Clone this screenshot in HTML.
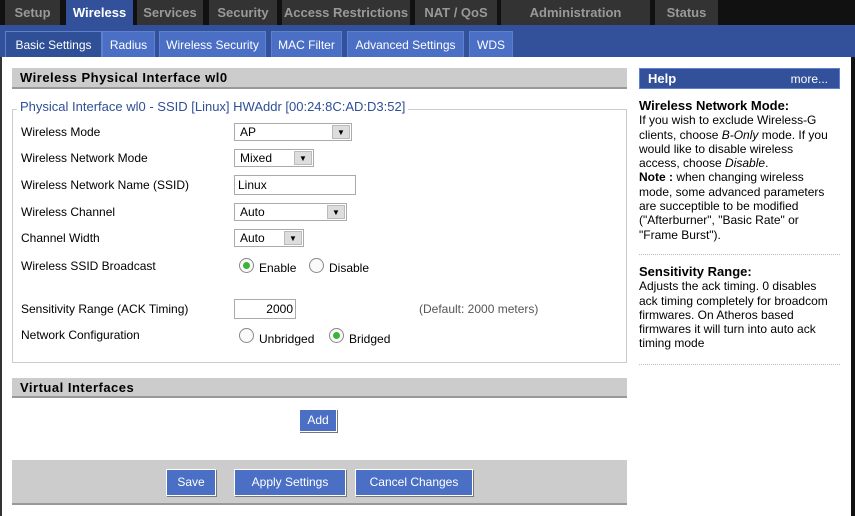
<!DOCTYPE html>
<html><head><meta charset="utf-8"><style>
*{margin:0;padding:0;box-sizing:border-box}
body{width:855px;height:516px;background:#fff;font-family:"Liberation Sans",sans-serif;font-size:12px;color:#000;position:relative;overflow:hidden}
.a{position:absolute}
.top{left:0;top:0;width:855px;height:25px;background:#111}
.tt{top:0;height:25px;background:#333;color:#999;font-weight:bold;font-size:13px;text-align:center;line-height:26px;white-space:nowrap}
.band{left:0;top:25px;width:855px;height:32px;background:#32519a}
.st{top:31px;height:26px;background:#4a6fc5;color:#fff;text-align:center;line-height:27px;font-size:12px;border:1px solid #5d80d0;border-bottom:none}
.hdr{background:#ccc;border-bottom:2px solid #999;font-weight:bold;font-size:13px;padding-left:8px;line-height:20px;letter-spacing:.5px}
.lbl{left:21px}
.sel{height:18px;border:1px solid #aaa;background:#fff;padding-left:5px;line-height:16px}
.sel i{position:absolute;right:1px;top:1px;width:18px;height:14px;background:#ddd;border:1px solid #bbb;font-style:normal;font-size:8px;text-align:center;line-height:13px}
.rad{width:15px;height:15px;border-radius:50%;border:1px solid #888;background:#fafafa}
.rad.on::after{content:"";position:absolute;left:3px;top:3px;width:7px;height:7px;border-radius:50%;background:#3bb33b}
.btn{background:#4a6fc5;color:#fff;text-align:center;border:1px solid #fff;box-shadow:1px 1px 0 #777;line-height:24px}
.help{left:639px;width:198px;font-size:12px;line-height:14.3px}
</style></head><body>
<div class="a top"></div>
<div class="a tt" style="left:5px;width:55px">Setup</div>
<div class="a tt" style="left:66px;width:67px;background:#32519a;color:#fff;height:30px">Wireless</div>
<div class="a tt" style="left:137px;width:66px">Services</div>
<div class="a tt" style="left:209px;width:68px">Security</div>
<div class="a tt" style="left:282px;width:128px">Access Restrictions</div>
<div class="a tt" style="left:415px;width:82px">NAT / QoS</div>
<div class="a tt" style="left:501px;width:149px">Administration</div>
<div class="a tt" style="left:655px;width:63px">Status</div>
<div class="a band"></div>
<div class="a st" style="left:5px;width:97px;background:#2f4f96;border-color:#5d80d0">Basic Settings</div>
<div class="a st" style="left:102px;width:53px">Radius</div>
<div class="a st" style="left:159px;width:107px">Wireless Security</div>
<div class="a st" style="left:271px;width:71px">MAC Filter</div>
<div class="a st" style="left:347px;width:117px">Advanced Settings</div>
<div class="a st" style="left:469px;width:44px">WDS</div>
<div class="a" style="left:0;top:57px;width:2px;height:459px;background:#333"></div>
<div class="a" style="left:851px;top:57px;width:4px;height:459px;background:#111"></div>

<div class="a hdr" style="left:12px;top:68px;width:615px;height:21px">Wireless Physical Interface wl0</div>
<div class="a" style="left:12px;top:109px;width:615px;height:254px;border:1px solid #ccc"></div>
<div class="a" style="left:17px;top:99px;background:#fff;color:#2f4f96;padding:0 3px;font-size:13px">Physical Interface wl0 - SSID [Linux] HWAddr [00:24:8C:AD:D3:52]</div>

<div class="a lbl" style="top:125px">Wireless Mode</div>
<div class="a sel" style="left:234px;top:123px;width:118px">AP<i>▼</i></div>
<div class="a lbl" style="top:151px">Wireless Network Mode</div>
<div class="a sel" style="left:234px;top:149px;width:80px">Mixed<i>▼</i></div>
<div class="a lbl" style="top:178px">Wireless Network Name (SSID)</div>
<div class="a" style="left:234px;top:175px;width:122px;height:20px;border:1px solid #aaa;padding-left:3px;line-height:18px">Linux</div>
<div class="a lbl" style="top:205px">Wireless Channel</div>
<div class="a sel" style="left:234px;top:203px;width:113px">Auto<i>▼</i></div>
<div class="a lbl" style="top:231px">Channel Width</div>
<div class="a sel" style="left:234px;top:229px;width:70px">Auto<i>▼</i></div>
<div class="a lbl" style="top:259px">Wireless SSID Broadcast</div>
<div class="a rad on" style="left:239px;top:258px"></div><div class="a" style="left:259px;top:261px">Enable</div>
<div class="a rad" style="left:309px;top:258px"></div><div class="a" style="left:329px;top:261px">Disable</div>
<div class="a lbl" style="top:302px">Sensitivity Range (ACK Timing)</div>
<div class="a" style="left:234px;top:299px;width:62px;height:20px;border:1px solid #aaa;text-align:right;padding-right:2px;line-height:18px">2000</div>
<div class="a" style="left:419px;top:302px;color:#555">(Default: 2000 meters)</div>
<div class="a lbl" style="top:328px">Network Configuration</div>
<div class="a rad" style="left:239px;top:328px"></div><div class="a" style="left:259px;top:332px">Unbridged</div>
<div class="a rad on" style="left:329px;top:328px"></div><div class="a" style="left:349px;top:332px">Bridged</div>

<div class="a hdr" style="left:12px;top:378px;width:615px;height:20px">Virtual Interfaces</div>
<div class="a btn" style="left:299px;top:409px;width:38px;height:23px;line-height:21px">Add</div>
<div class="a" style="left:12px;top:460px;width:615px;height:45px;background:#ccc;border-bottom:2px solid #999"></div>
<div class="a btn" style="left:166px;top:469px;width:50px;height:27px">Save</div>
<div class="a btn" style="left:234px;top:469px;width:112px;height:27px">Apply Settings</div>
<div class="a btn" style="left:355px;top:469px;width:118px;height:27px">Cancel Changes</div>

<div class="a" style="left:639px;top:68px;width:201px;height:21px;background:#32519a;border:1px solid #5d80d0;color:#fff"><b style="position:absolute;left:8px;top:2px;font-size:13px">Help</b><span style="position:absolute;right:11px;top:3px">more...</span></div>
<div class="a help" style="top:99px"><b style="font-size:13px">Wireless Network Mode:</b><br>If you wish to exclude Wireless-G clients, choose <i>B-Only</i> mode. If you would like to disable wireless access, choose <i>Disable</i>.<br><b>Note :</b> when changing wireless mode, some advanced parameters are succeptible to be modified ("Afterburner", "Basic Rate" or "Frame Burst").</div>
<div class="a" style="left:639px;top:254px;width:201px;border-top:1px dotted #bbb"></div>
<div class="a help" style="top:265px"><b style="font-size:13px">Sensitivity Range:</b><br>Adjusts the ack timing. 0 disables ack timing completely for broadcom firmwares. On Atheros based firmwares it will turn into auto ack timing mode</div>
<div class="a" style="left:639px;top:364px;width:201px;border-top:1px dotted #bbb"></div>
</body></html>
